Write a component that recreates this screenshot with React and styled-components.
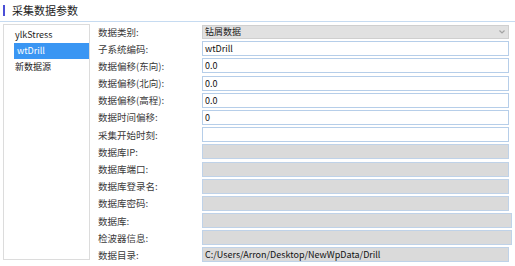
import React from 'react';
import styled, { createGlobalStyle } from 'styled-components';

const GlobalStyle = createGlobalStyle`
body {
  margin: 0;
  background: #ffffff;
  font-family: "Noto Sans CJK SC", "Noto Sans", sans-serif;
}
`

const Page = styled.div`
width: 515px;
height: 266px;
display: flex;
flex-direction: column;
background: #fff;
overflow: hidden;
`

const TitleBar = styled.div`
display: flex;
align-items: center;
gap: 7px;
height: 21px;
padding-left: 3px;
border-bottom: 1px solid #c6dbf1;
`

const Accent = styled.div`
width: 2px;
height: 11px;
background: #4b4fd6;
`

const Title = styled.h1`
margin: 0;
font-size: 11px;
font-weight: normal;
color: #222;
line-height: 1;
`

const Body = styled.div`
display: flex;
padding: 2px 0 0 3px;
gap: 8px;
`

const SourceList = styled.ul`
list-style: none;
margin: 0;
padding: 2px 0 0 10px;
width: 75px;
height: 232px;
border: 1px solid #dcdcdc;
`

const SourceItem = styled.li`
height: 16px;
line-height: 16px;
font-size: 9px;
padding-left: ${p => (p.selected ? '3px' : '1px')};
color: ${p => (p.selected ? '#ffffff' : '#222')};
background: ${p => (p.selected ? '#3a96f3' : 'transparent')};
`

const Form = styled.div`
display: flex;
flex-direction: column;
gap: 2.2px;
flex: 1;
`

const Row = styled.div`
display: flex;
align-items: center;
height: 15px;
`

const Label = styled.label`
width: 104px;
font-size: 9.5px;
color: #3a3a3a;
white-space: nowrap;
`

const Field = styled.div`
box-sizing: border-box;
height: 15px;
width: ${p => (p.wide ? '310px' : '307px')};
border: 1px solid ${p => (p.disabled ? '#bfd2e8' : '#b6cee9')};
background: ${p => (p.disabled ? '#dadada' : '#ffffff')};
padding-left: 2px;
font-size: 9px;
line-height: 13px;
color: #111;
white-space: nowrap;
overflow: hidden;
`

const Select = styled.div`
box-sizing: border-box;
height: 14px;
width: 307px;
display: flex;
align-items: center;
justify-content: space-between;
border: 1px solid #cfcfcf;
background: #e1e1e1;
padding: 0 3px 0 2px;
font-size: 9px;
color: #222;
`

const Chevron = () => (
  <svg width="6" height="4" viewBox="0 0 6 4">
    <path d="M0.5 0.5 L3 3 L5.5 0.5" fill="none" stroke="#a3a3a3" strokeWidth="1.2" />
  </svg>
)

const fields = [
  { label: '子系统编码:', value: 'wtDrill' },
  { label: '数据偏移(东向):', value: '0.0' },
  { label: '数据偏移(北向):', value: '0.0' },
  { label: '数据偏移(高程):', value: '0.0' },
  { label: '数据时间偏移:', value: '0' },
  { label: '采集开始时刻:', value: '' },
  { label: '数据库IP:', value: '', disabled: true },
  { label: '数据库端口:', value: '', disabled: true },
  { label: '数据库登录名:', value: '', disabled: true },
  { label: '数据库密码:', value: '', disabled: true },
  { label: '数据库:', value: '', disabled: true, wide: true },
  { label: '检波器信息:', value: '', disabled: true, wide: true },
  { label: '数据目录:', value: 'C:/Users/Arron/Desktop/NewWpData/Drill', disabled: true },
]

const sources = ['ylkStress', 'wtDrill', '新数据源']

const App = () => {
  return (
    <>
      <GlobalStyle />
      <Page>
        <TitleBar>
          <Accent />
          <Title>采集数据参数</Title>
        </TitleBar>
        <Body>
          <SourceList>
            {sources.map(s => (
              <SourceItem key={s} selected={s === 'wtDrill'}>{s}</SourceItem>
            ))}
          </SourceList>
          <Form>
            <Row>
              <Label>数据类别:</Label>
              <Select>
                <span>钻屑数据</span>
                <Chevron />
              </Select>
            </Row>
            {fields.map(f => (
              <Row key={f.label}>
                <Label>{f.label}</Label>
                <Field disabled={f.disabled} wide={f.wide}>{f.value}</Field>
              </Row>
            ))}
          </Form>
        </Body>
      </Page>
    </>
  );
}

export default App;
